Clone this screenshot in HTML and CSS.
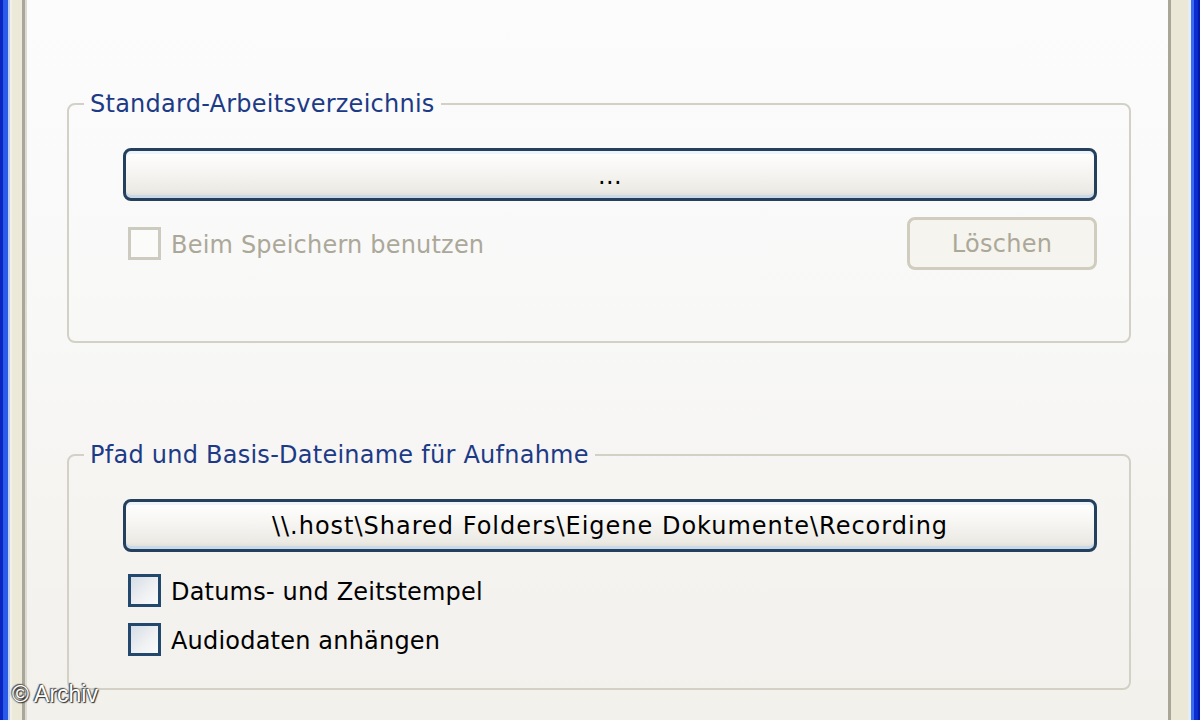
FILE: index.html
```html
<!DOCTYPE html>
<html lang="de">
<head>
<meta charset="utf-8">
<title>Optionen</title>
<link rel="stylesheet" href="styles.css">
</head>
<body>
<div class="window">
  <div class="frame-l"></div>
  <div class="content">
    <fieldset class="group first">
      <legend class="group-title">Standard-Arbeitsverzeichnis</legend>
      <div class="group-body">
        <div class="btn wide">...</div>
        <div class="row split">
          <label class="check disabled"><span class="box"></span><span class="lbl">Beim Speichern benutzen</span></label>
          <div class="btn small disabled-btn">Löschen</div>
        </div>
      </div>
    </fieldset>
    <fieldset class="group second">
      <legend class="group-title">Pfad und Basis-Dateiname für Aufnahme</legend>
      <div class="group-body">
        <div class="btn wide path">\\.host\Shared Folders\Eigene Dokumente\Recording</div>
        <div class="checks">
          <label class="check"><span class="box"></span><span class="lbl">Datums- und Zeitstempel</span></label>
          <label class="check"><span class="box"></span><span class="lbl">Audiodaten anhängen</span></label>
        </div>
      </div>
    </fieldset>
  </div>
  <div class="frame-r"></div>
  <div class="watermark">© Archiv</div>
</div>
</body>
</html>
```

FILE: styles.css
```css
html, body {
  margin: 0;
  padding: 0;
}
body {
  width: 1200px;
  height: 720px;
  overflow: hidden;
  font-family: "DejaVu Sans", Verdana, sans-serif;
  font-size: 24px;
  color: #000;
}
.window {
  position: relative;
  display: flex;
  width: 1200px;
  height: 720px;
}
.frame-l {
  width: 27px;
  flex: none;
  background: linear-gradient(to right,
    #0a24c0 0 3px, #2a5ae8 3px 8px, #bcd0f4 8px 10px, #f1efe6 10px 12px,
    #ece9d8 12px 22px, #a9a79a 22px 25px, #dcdad1 25px 27px);
}
.frame-r {
  width: 32px;
  flex: none;
  background: linear-gradient(to right,
    #a8a698 0 3px, #ebe8d7 3px 20px, #e6ecf5 20px 23px,
    #3a6cf0 23px 26px, #0a2cd0 26px 30px, #0019a8 30px 32px);
}
.content {
  flex: 1;
  padding: 89px 37px 0 40px;
  background: linear-gradient(#fcfcfd 0%, #f8f8f7 45%, #f4f2ee 85%, #f3f1ec 100%);
}
.group {
  margin: 0;
  padding: 0;
  min-width: 0;
  border: 2px solid #d3d1c6;
  border-radius: 8px;
}
.group.second {
  margin-top: 97px;
}
.group-title {
  margin-left: 15px;
  padding: 0 6px;
  height: 30px;
  line-height: 30px;
  color: #1c3a86;
  letter-spacing: 0.25px;
}
.group-body {
  padding: 29px 32px 71px 54px;
}
.group.second .group-body {
  padding-bottom: 32px;
}
.btn {
  box-sizing: border-box;
  height: 53px;
  display: flex;
  align-items: center;
  justify-content: center;
  border: 3px solid #24405c;
  border-radius: 8px;
  background: linear-gradient(#ffffff 0%, #f6f5f2 45%, #eceae4 85%, #dedbd2 100%);
  box-shadow: inset 0 -3px 0 #c9d9ec, inset 0 3px 0 #eef4fb;
  letter-spacing: 0.3px;
}
.btn.wide {
  width: 100%;
  padding-top: 2px;
}
.btn.path {
  letter-spacing: 1px;
  padding-top: 0;
}
.row.split {
  margin-top: 16px;
  display: flex;
  align-items: center;
  justify-content: space-between;
}
.btn.small {
  width: 190px;
}
.disabled-btn {
  border-color: #d0cdbf;
  background: #f5f4ee;
  box-shadow: none;
  color: #aca899;
}
.checks {
  margin-top: 22px;
  display: flex;
  flex-direction: column;
  gap: 16px;
}
.check {
  display: flex;
  align-items: center;
  height: 33px;
  padding-left: 5px;
}
.box {
  box-sizing: border-box;
  width: 33px;
  height: 33px;
  flex: none;
  border: 3px solid #22486e;
  background: linear-gradient(135deg, #d5dde6 0%, #eef0f2 55%, #fbfbfb 100%);
  margin-right: 10px;
}
.check.disabled .box {
  border-color: #cdcbbf;
  background: #fbfbf9;
}
.lbl {
  line-height: 33px;
  padding-top: 3px;
  letter-spacing: 0.2px;
}
.check.disabled .lbl {
  color: #aca899;
}
.watermark {
  position: absolute;
  left: 12px;
  top: 681px;
  font-family: "Liberation Sans", Arial, sans-serif;
  font-size: 23px;
  color: #fff;
  text-shadow: 0 0 2px #222, 1px 1px 1px #333, -1px -1px 1px #555;
}
```
